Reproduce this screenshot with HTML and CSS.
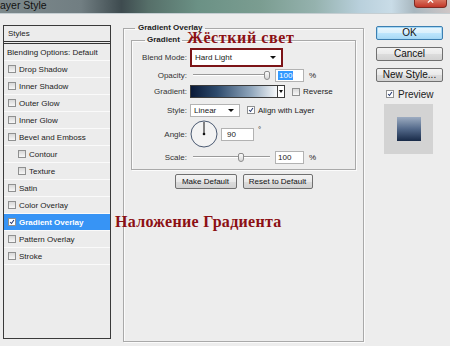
FILE: index.html
```html
<!DOCTYPE html>
<html lang="ru">
<head>
    <meta charset="UTF-8">
    <meta name="viewport" content="width=device-width, initial-scale=1.0">
    <link rel="stylesheet" href="styles.css">
    <title>Layer Style</title>
</head>
<body>
    <div class="window">
        <div class="titlebar">
            <span class="title">ayer Style</span>
            <span class="close"><svg viewBox="0 0 33 8"><path d="M13.5 -3 L19.5 3 M19.5 -3 L13.5 3" /></svg></span>
        </div>

        <div class="dialog">
            <div class="styles-list">
                <div class="list-head">Styles</div>
                <div class="list-item plain">Blending Options: Default</div>
                <div class="list-item"><span class="cb"></span>Drop Shadow</div>
                <div class="list-item"><span class="cb"></span>Inner Shadow</div>
                <div class="list-item"><span class="cb"></span>Outer Glow</div>
                <div class="list-item"><span class="cb"></span>Inner Glow</div>
                <div class="list-item"><span class="cb"></span>Bevel and Emboss</div>
                <div class="list-item sub"><span class="cb"></span>Contour</div>
                <div class="list-item sub"><span class="cb"></span>Texture</div>
                <div class="list-item"><span class="cb"></span>Satin</div>
                <div class="list-item"><span class="cb"></span>Color Overlay</div>
                <div class="list-item active"><span class="cb checked"><svg viewBox="0 0 8 8"><path d="M1.5 4 L3.3 6 L6.6 1.4" /></svg></span>Gradient Overlay</div>
                <div class="list-item"><span class="cb"></span>Pattern Overlay</div>
                <div class="list-item"><span class="cb"></span>Stroke</div>
            </div>

            <fieldset class="group outer">
                <legend>Gradient Overlay</legend>
                <fieldset class="group inner">
                    <legend>Gradient</legend>
                    <div class="form">
                        <label class="row-1">Blend Mode:</label>
                        <div class="ctrl row-1">
                            <div class="select marked">Hard Light<span class="arrow"></span></div>
                        </div>

                        <label class="row-2">Opacity:</label>
                        <div class="ctrl row-2">
                            <div class="slider">
                                <span class="track" style="width: 71px"></span>
                                <span class="thumb"></span>
                                <span class="track rest"></span>
                            </div>
                            <div class="field"><span class="selected">100</span></div>
                            <span class="unit">%</span>
                        </div>

                        <label class="row-3">Gradient:</label>
                        <div class="ctrl row-3">
                            <div class="swatch"></div>
                            <div class="swatch-drop"><span class="arrow small"></span></div>
                            <span class="cb gap"></span>
                            <span class="cb-label">Reverse</span>
                        </div>

                        <label class="row-4">Style:</label>
                        <div class="ctrl row-4">
                            <div class="select short">Linear<span class="arrow"></span></div>
                            <span class="cb gap checked"><svg viewBox="0 0 8 8"><path d="M1.5 4 L3.3 6 L6.6 1.4" /></svg></span>
                            <span class="cb-label">Align with Layer</span>
                        </div>

                        <label class="row-5">Angle:</label>
                        <div class="ctrl row-5">
                            <svg class="dial" viewBox="0 0 28 28">
                                <circle cx="14" cy="14" r="13" />
                                <line x1="14" y1="14" x2="14" y2="2" />
                                <circle class="hub" cx="14" cy="14" r="1.3" />
                            </svg>
                            <div class="field angle">90</div>
                            <span class="deg">°</span>
                        </div>

                        <label class="row-6">Scale:</label>
                        <div class="ctrl row-6">
                            <div class="slider">
                                <span class="track" style="width: 45px"></span>
                                <span class="thumb"></span>
                                <span class="track rest"></span>
                            </div>
                            <div class="field">100</div>
                            <span class="unit">%</span>
                        </div>
                    </div>
                </fieldset>
                <div class="actions">
                    <button class="btn">Make Default</button>
                    <button class="btn wide">Reset to Default</button>
                </div>
            </fieldset>

            <div class="side">
                <button class="btn big default">OK</button>
                <button class="btn big">Cancel</button>
                <button class="btn big">New Style...</button>
                <div class="preview-check">
                    <span class="cb checked"><svg viewBox="0 0 8 8"><path d="M1.5 4 L3.3 6 L6.6 1.4" /></svg></span>
                    <span>Preview</span>
                </div>
                <div class="preview">
                    <div class="preview-square"></div>
                </div>
            </div>
        </div>

        <div class="note note-mode">Жёсткий свет</div>
        <div class="note note-layer">Наложение Градиента</div>
    </div>
</body>
</html>
```

FILE: styles.css
```css
* {
    box-sizing: border-box;
}

body {
    margin: 0;
    width: 450px;
    height: 346px;
    overflow: hidden;
    background-color: #ededed;
    font-family: "Liberation Sans", Arial, sans-serif;
    font-size: 8px;
    color: #222;
}

.window {
    position: relative;
    width: 450px;
    height: 346px;
}

/* title bar (blurred aero glass) */
.titlebar {
    height: 14px;
    display: flex;
    justify-content: space-between;
    align-items: flex-start;
    background: linear-gradient(90deg, #7d898c 0%, #717e82 18%, #3e4b4f 27%, #566f69 33%, #6b9185 44%, #7b9d91 58%, #95b2ae 70%, #b9d0dc 80%, #c9dce7 87%, #a8b7bf 92%, #cfc6c6 100%);
    border-bottom: 1px solid #c5ced2;
}

.title {
    font-size: 10.5px;
    line-height: 10px;
    color: #111;
}

.close {
    width: 33px;
    height: 8px;
    margin-right: 3px;
    border-radius: 0 0 4px 4px;
    background: linear-gradient(#d9735f, #c2372a);
    border: 1px solid #7e2a22;
    border-top: none;
}

.close svg {
    display: block;
    width: 31px;
    height: 7px;
}

.close path {
    stroke: #fff;
    stroke-width: 1.6;
}

.dialog {
    display: grid;
    grid-template-columns: 108px 241px 67px;
    column-gap: 12px;
    align-items: start;
    padding: 11px 0 0 3px;
}

/* left list */
.styles-list {
    height: 314px;
    border: 1px solid #3a3a3a;
    background-color: #ececec;
}

.list-head {
    height: 18px;
    padding: 3px 0 0 4px;
    border-bottom: 3px double #333;
}

.list-item {
    height: 17px;
    display: flex;
    align-items: center;
    gap: 3px;
    padding-left: 4px;
    border-bottom: 1px solid #fafafa;
}

.list-item.plain {
    padding-left: 3px;
}

.list-item.sub {
    padding-left: 14px;
}

.list-item.active {
    background-color: #3794f5;
    color: #fff;
    font-weight: bold;
}

.list-item.active .cb {
    background: #fff;
}

/* checkboxes */
.cb {
    display: inline-block;
    flex: none;
    width: 8px;
    height: 8px;
    border: 1px solid #8f9090;
    background: linear-gradient(#d8d8d8, #f7f7f7);
}

.cb svg {
    display: block;
    width: 6px;
    height: 6px;
}

.cb path {
    fill: none;
    stroke: #22356e;
    stroke-width: 1.4;
}

.cb.checked {
    background: #fff;
}

.cb.gap {
    margin-left: 7px;
}

.cb-label {
    margin-left: 3px;
}

/* group boxes */
.group {
    margin: 0;
    border: 1px solid #a9a9a9;
    box-shadow: inset 1px 1px 0 #fbfbfb, 1px 1px 0 #fbfbfb;
}

.group legend {
    font-weight: bold;
    line-height: 10px;
    color: #222;
}

.outer {
    margin-top: -2px;
    height: 319px;
    padding: 2px 7px 0 7px;
}

.outer > legend {
    margin-left: 4px;
    padding: 0 3px;
}

.inner {
    padding: 3px 4px;
}

.inner > legend {
    margin-left: 9px;
    padding: 0 2px;
}

.form {
    display: grid;
    grid-template-columns: 51px 1fr;
    grid-template-rows: 19px 16px 17px 20px 28px 18px;
    column-gap: 3px;
}

.form label {
    align-self: center;
    text-align: right;
    color: #333;
    white-space: nowrap;
}

.ctrl {
    display: flex;
    align-items: center;
}

.select {
    display: flex;
    align-items: center;
    height: 13px;
    padding-left: 3px;
    background-color: #fff;
    border: 1px solid #b4b4b4;
}

.select.marked {
    width: 93px;
    height: 19px;
    border: 2px solid #7c1417;
    padding-left: 3px;
}

.select.short {
    width: 50px;
}

.arrow {
    margin-left: auto;
    margin-right: 5px;
    width: 0;
    height: 0;
    border-left: 3px solid transparent;
    border-right: 3px solid transparent;
    border-top: 3px solid #111;
}

.arrow.small {
    margin: 0;
    border-width: 3px 2px 0;
}

/* sliders */
.slider {
    display: flex;
    align-items: center;
    width: 77px;
    margin-left: 3px;
}

.track {
    height: 2px;
    border-top: 1px solid #9a9a9a;
    border-bottom: 1px solid #fff;
}

.track.rest {
    flex: 1;
}

.thumb {
    flex: none;
    width: 6px;
    height: 9px;
    border: 1px solid #8c8c8c;
    border-radius: 2px 2px 3px 3px;
    background: linear-gradient(#fafafa, #d6d6d6);
}

.field {
    display: flex;
    align-items: center;
    width: 29px;
    height: 13px;
    margin-left: 5px;
    padding-left: 2px;
    background-color: #fff;
    border: 1px solid #b2b2b2;
}

.selected {
    background-color: #3399ff;
    color: #fff;
    padding: 0 1px;
}

.unit {
    margin-left: 5px;
}

/* gradient swatch */
.swatch {
    width: 88px;
    height: 13px;
    border: 1px solid #3c3c3c;
    background: linear-gradient(90deg, #0a1a38 0%, #2d4a6c 30%, #90a6bc 70%, #f6f8fa 100%);
}

.swatch-drop {
    display: flex;
    align-items: center;
    justify-content: center;
    width: 7px;
    height: 13px;
    border: 1px solid #3c3c3c;
    border-left: none;
    background-color: #fff;
}

/* angle */
.dial {
    width: 28px;
    height: 28px;
}

.dial circle {
    fill: #f3f3f3;
    stroke: #4b5a72;
    stroke-width: 1;
}

.dial line {
    stroke: #111;
    stroke-width: 1;
}

.dial .hub {
    fill: #111;
    stroke: none;
}

.field.angle {
    width: 33px;
    margin-left: 3px;
    padding-left: 5px;
}

.deg {
    align-self: flex-start;
    margin: 5px 0 0 4px;
}

/* buttons */
.actions {
    display: flex;
    justify-content: center;
    gap: 6px;
    margin-top: 4px;
}

.btn {
    height: 15px;
    width: 62px;
    padding: 0;
    font-family: "Liberation Sans", Arial, sans-serif;
    font-size: 8px;
    color: #111;
    border: 1px solid #707070;
    border-radius: 2px;
    background: linear-gradient(#f3f3f3 0%, #e9e9e9 50%, #dcdcdc 51%, #d2d2d2 100%);
}

.btn.wide {
    width: 70px;
}

.side {
    display: flex;
    flex-direction: column;
    margin-top: 1px;
}

.btn.big {
    width: 67px;
    height: 14px;
    font-size: 10px;
    line-height: 12px;
    margin-bottom: 7px;
}

.btn.default {
    border-color: #3c7fb1;
    box-shadow: 0 0 0 1px #a6d8f5 inset;
    background: linear-gradient(#eaf6fd 0%, #d9f0fc 50%, #bee6fd 51%, #a7d9f5 100%);
}

.preview-check {
    display: flex;
    align-items: center;
    gap: 4px;
    height: 14px;
    margin: -2px 0 0 10px;
    font-size: 10px;
}

.preview {
    display: flex;
    align-items: center;
    justify-content: center;
    width: 49px;
    height: 50px;
    margin: 3px 0 0 8px;
    background-color: #d3d3d3;
}

.preview-square {
    width: 24px;
    height: 24px;
    background: linear-gradient(#9dacc1, #53698a 50%, #182a48);
}

/* tutorial annotations drawn over the dialog */
.note {
    position: absolute;
    font-family: "Liberation Serif", "Times New Roman", serif;
    font-weight: bold;
    font-size: 16px;
    line-height: 16px;
    letter-spacing: 0.3px;
    color: #8c1014;
    white-space: nowrap;
}

.note-mode {
    left: 187px;
    top: 30px;
    letter-spacing: 0.6px;
}

.note-layer {
    left: 115px;
    top: 214px;
}
```
